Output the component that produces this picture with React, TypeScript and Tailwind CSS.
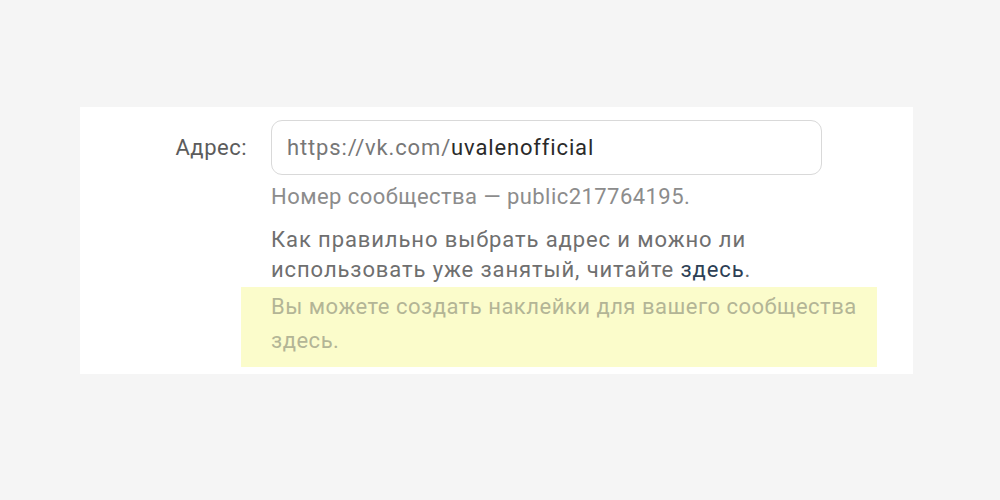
import React from "react";

export default function App() {
  return (
    <div
      className="w-[1000px] h-[500px] bg-[#f5f5f5] pt-[107px] pl-[80px]"
      style={{ fontFamily: "Roboto, 'Noto Sans', sans-serif" }}
    >
      <div className="w-[833px] h-[267px] bg-white pt-[13px] flex">
        <div className="w-[191px] flex justify-end pr-[24px] shrink-0">
          <div className="h-[55px] flex items-center text-[22px] tracking-[0.5px] text-[#5c5c5c]">Адрес:</div>
        </div>
        <div className="flex flex-col">
          <div className="w-[551px] h-[55px] rounded-[11px] border border-[#d9d9d9] flex items-center pl-[15px] text-[22px] tracking-[0.85px]">
            <span className="text-[#777777]">https://vk.com/</span>
            <span className="text-[#2a2a2a]">uvalenofficial</span>
          </div>
          <div className="mt-[7px] h-[30px] leading-[30px] text-[22px] tracking-[0.45px] text-[#8c8c8c]">
            Номер сообщества — public217764195.
          </div>
          <div className="mt-[13px] leading-[30px] text-[22px] tracking-[0.9px] text-[#6f6f6f]">
            Как правильно выбрать адрес и можно ли
            <br />
            использовать уже занятый, читайте <span className="text-[#2d3f55]">здесь</span>.
          </div>
          <div className="mt-[2px] -ml-[30px] w-[636px] h-[80px] bg-[#fbfccb] pl-[30px] pt-[3px] leading-[34px] text-[22px] tracking-[0.5px] text-[#b3b596]">
            Вы можете создать наклейки для вашего сообщества
            <br />
            здесь.
          </div>
        </div>
      </div>
    </div>
  );
}
